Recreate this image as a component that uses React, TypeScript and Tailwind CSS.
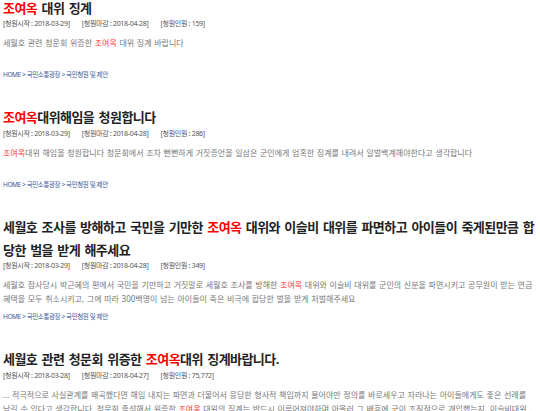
import React from 'react';

type Petition = {
  title: [string, string, string];
  start: string;
  end: string;
  count: string;
  desc: [string, string, string];
};

const NAME = '조여옥';

const petitions: Petition[] = [
  {
    title: ['', NAME, ' 대위 징계'],
    start: '2018-03-29',
    end: '2018-04-28',
    count: '159',
    desc: ['세월호 관련 청문회 위증한 ', NAME, ' 대위 징계 바랍니다'],
  },
  {
    title: ['', NAME, '대위해임을 청원합니다'],
    start: '2018-03-29',
    end: '2018-04-28',
    count: '286',
    desc: [
      '',
      NAME,
      '대위 해임을 청원합니다 청문회에서 조차 뻔뻔하게 거짓증언을 일삼은 군인에게 엄혹한 징계를 내려서 일벌백계해야한다고 생각합니다',
    ],
  },
  {
    title: [
      '세월호 조사를 방해하고 국민을 기만한 ',
      NAME,
      ' 대위와 이슬비 대위를 파면하고 아이들이 죽게된만큼 합당한 벌을 받게 해주세요',
    ],
    start: '2018-03-29',
    end: '2018-04-28',
    count: '349',
    desc: [
      '세월호 참사당시 박근혜의 편에서 국민을 기만하고 거짓말로 세월호 조사를 방해한 ',
      NAME,
      ' 대위와 이슬비 대위를 군인의 신분을 파면시키고 공무원이 받는 연금 혜택을 모두 취소시키고, 그에 따라 300백명이 넘는 아이들이 죽은 비극에 합당한 벌을 받게 처벌해주세요',
    ],
  },
  {
    title: ['세월호 관련 청문회 위증한 ', NAME, '대위 징계바랍니다.'],
    start: '2018-03-28',
    end: '2018-04-27',
    count: '75,772',
    desc: [
      '... 적극적으로 사실관계를 왜곡했다면 해임 내지는 파면과 더불어서 응당한 형사적 책임까지 물어야만 정의를 바로세우고 자라나는 아이들에게도 좋은 선례를 남길 수 있다고 생각합니다. 청문회 출석해서 위증한 ',
      NAME,
      ' 대위의 징계는 반드시 이루어져야하며 아울러 그 배후에 군이 조직적으로 개입했는지, 이슬비대위에 대한 조사도 함께 이루어져야 한다고 생각합니다 ...',
    ],
  },
];

function PetitionItem({ p }: { p: Petition }) {
  return (
    <li className="mb-[26px]">
      <h2 className="text-[13px] font-bold leading-[23px] tracking-[-0.55px] [word-spacing:1.5px] text-[#222]">
        {p.title[0]}
        <span className="text-[#ff0000]">{p.title[1]}</span>
        {p.title[2]}
      </h2>

      {/* meta */}
      <div className="-mt-[1.5px] flex gap-[12px] text-[7px] leading-[12px] tracking-[-0.3px] text-[#555]">
        <span>[청원시작 : {p.start}]</span>
        <span>[청원마감 : {p.end}]</span>
        <span>[청원인원 : {p.count}]</span>
      </div>

      <p className="mt-[6px] h-[28px] overflow-hidden break-keep text-[8px] leading-[14px] [word-spacing:0.6px] text-[#777] line-clamp-2">
        {p.desc[0]}
        <span className="text-[#ff3535]">{p.desc[1]}</span>
        {p.desc[2]}
      </p>

      <div className="mt-[6px] text-[6.5px] leading-[10px] tracking-[-0.4px] text-[#3b5a9a]">
        HOME &gt; 국민소통광장 &gt; 국민청원 및 제안
      </div>
    </li>
  );
}

export default function App() {
  return (
    <div className="h-[411px] w-[540px] overflow-hidden bg-white pl-[3px] font-['Noto_Sans','Noto_Sans_CJK_KR',sans-serif]">
      <ul className="-mt-[3.5px]">
        {petitions.map((p, i) => (
          <PetitionItem key={i} p={p} />
        ))}
      </ul>
    </div>
  );
}
